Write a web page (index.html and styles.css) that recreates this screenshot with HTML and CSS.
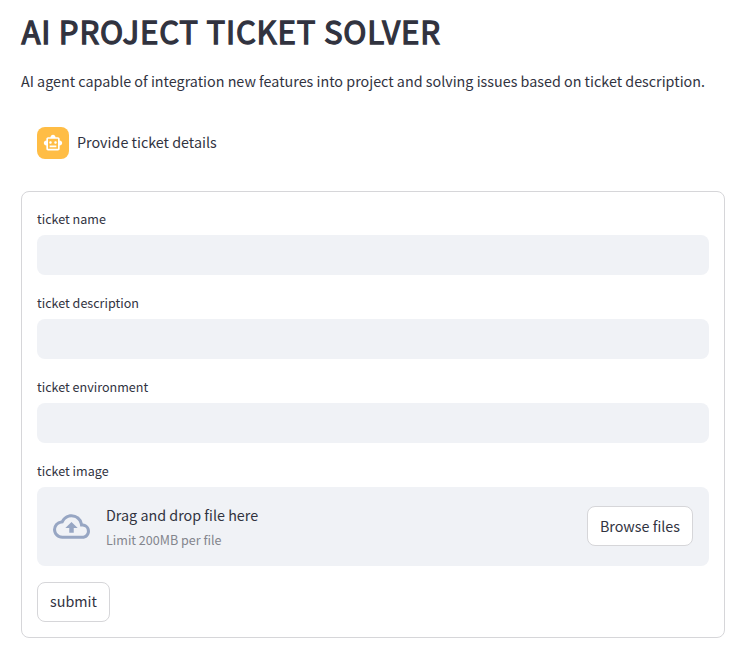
FILE: index.html
```html
<!DOCTYPE html>
<html lang="en">
<head>
<meta charset="utf-8">
<title>AI Project Ticket Solver</title>
<link rel="stylesheet" href="styles.css">
</head>
<body>
<main class="page">
  <h1 class="title">AI PROJECT TICKET SOLVER</h1>
  <p class="intro">AI agent capable of integration new features into project and solving issues based on ticket description.</p>
  <div class="message">
    <div class="avatar">
      <svg width="20" height="20" viewBox="0 0 24 24" fill="currentColor"><path d="M20 9V7c0-1.1-.9-2-2-2h-3c0-1.66-1.34-3-3-3S9 3.34 9 5H6c-1.1 0-2 .9-2 2v2c-1.66 0-3 1.34-3 3s1.34 3 3 3v4c0 1.1.9 2 2 2h12c1.1 0 2-.9 2-2v-4c1.66 0 3-1.34 3-3s-1.34-3-3-3zm-2 10H6V7h12v12zm-9-6c-.83 0-1.5-.67-1.5-1.5S8.17 10 9 10s1.5.67 1.5 1.5S9.83 13 9 13zm7.5-1.5c0 .83-.67 1.5-1.5 1.5s-1.5-.67-1.5-1.5.67-1.5 1.5-1.5 1.5.67 1.5 1.5zM8 15h8v2H8v-2z"/></svg>
    </div>
    <p class="message-text">Provide ticket details</p>
  </div>
  <form class="form">
    <div class="field">
      <label class="label" for="name">ticket name</label>
      <input class="input" id="name" type="text">
    </div>
    <div class="field">
      <label class="label" for="description">ticket description</label>
      <input class="input" id="description" type="text">
    </div>
    <div class="field">
      <label class="label" for="environment">ticket environment</label>
      <input class="input" id="environment" type="text">
    </div>
    <div class="field">
      <span class="label">ticket image</span>
      <div class="dropzone">
        <svg class="cloud" width="37" height="37" viewBox="0 0 24 24" fill="currentColor"><path d="M19.35 10.04A7.49 7.49 0 0012 4C9.11 4 6.6 5.64 5.35 8.04A5.994 5.994 0 000 14c0 3.31 2.69 6 6 6h13c2.76 0 5-2.24 5-5 0-2.64-2.05-4.78-4.65-4.96zM19 18H6c-2.21 0-4-1.79-4-4 0-2.05 1.53-3.76 3.56-3.97l1.07-.11.5-.95A5.469 5.469 0 0112 6c2.62 0 4.88 1.86 5.39 4.43l.3 1.5 1.53.11A2.98 2.98 0 0122 15c0 1.65-1.35 3-3 3zM8 13h2.55v3h2.9v-3H16l-4-4z"/></svg>
        <div class="drop-text">
          <span class="drop-title">Drag and drop file here</span>
          <small class="drop-hint">Limit 200MB per file</small>
        </div>
        <button class="button browse" type="button">Browse files</button>
      </div>
    </div>
    <button class="button submit" type="button">submit</button>
  </form>
</main>
</body>
</html>
```
FILE: styles.css
```css
* {
  box-sizing: border-box;
}

body {
  margin: 0;
  background: #fff;
  color: #31333f;
  font-family: "Noto Sans CJK SC", "Open Sans", sans-serif;
  font-size: 14.33px;
  line-height: 24px;
}

.page {
  padding: 10px 20px 0 21px;
}

.title {
  margin: 0;
  padding-left: 0.4px;
  font-size: 31.2px;
  line-height: 42px;
  font-weight: 400;
  -webkit-text-stroke: 1.3px #31333f;
  letter-spacing: 0.79px;
  white-space: nowrap;
}

.intro {
  margin: 17px 0 0;
  white-space: nowrap;
}

.message {
  display: flex;
  align-items: center;
  gap: 8px;
  margin-top: 34px;
  padding-left: 16px;
}

.avatar {
  display: flex;
  align-items: center;
  justify-content: center;
  width: 32px;
  height: 32px;
  border-radius: 8px;
  background: #ffbd45;
  color: #fff;
}

.message-text {
  margin: 0 0 2px;
}

.form {
  display: flex;
  flex-direction: column;
  gap: 16px;
  height: 447px;
  margin-top: 32px;
  padding: 15px;
  border: 1px solid #d6d6d9;
  border-radius: 8px;
}

.label {
  display: block;
  height: 28px;
  font-size: 12.55px;
  line-height: 24px;
}

.input {
  display: block;
  width: 100%;
  height: 40px;
  padding: 8px;
  border: 0;
  border-radius: 8px;
  background: #f0f2f6;
  font: inherit;
}

.dropzone {
  display: flex;
  align-items: center;
  height: 79px;
  padding: 0 16px 1px;
  border-radius: 8px;
  background: #f0f2f6;
}

.cloud {
  color: #97a6c3;
}

.drop-text {
  display: flex;
  flex: 1;
  flex-direction: column;
  margin-left: 16px;
  padding-top: 2px;
}

.drop-hint {
  padding-top: 1px;
  color: #83858d;
  font-size: 12.55px;
}

.button {
  height: 40px;
  padding: 0 12px 2px;
  border: 1px solid #d6d6d9;
  border-radius: 8px;
  background: #fff;
  color: inherit;
  font: inherit;
}

.browse {
  padding-bottom: 0;
}

.submit {
  align-self: flex-start;
}
```
